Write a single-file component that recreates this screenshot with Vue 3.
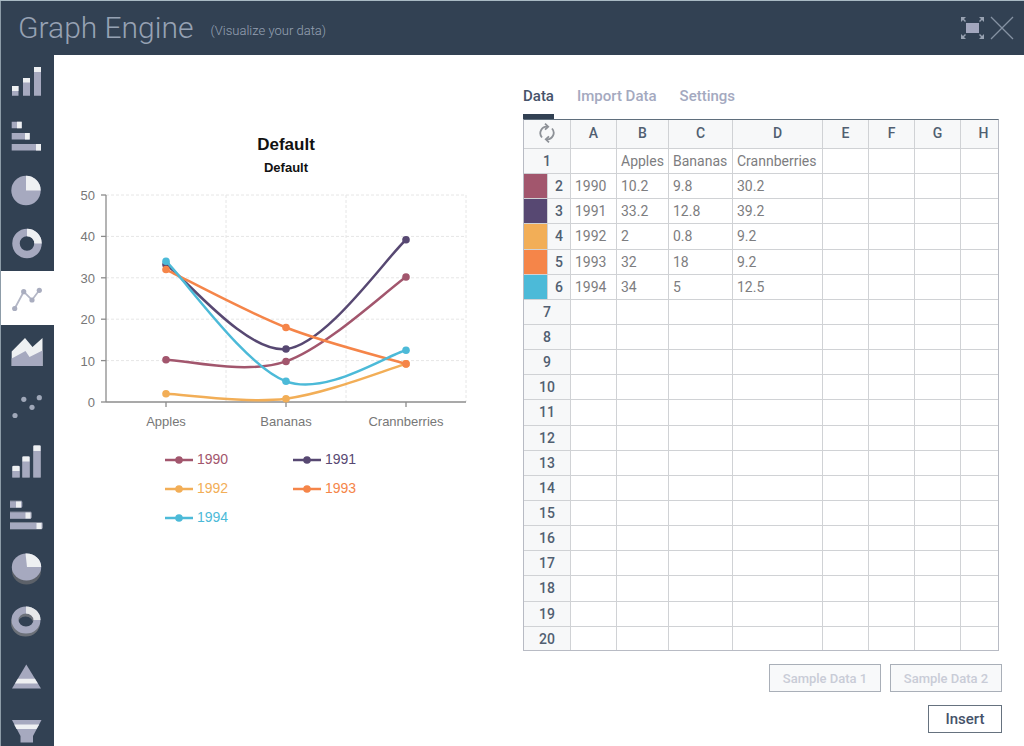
<script setup>
import { ref, computed } from 'vue'

const tools = [
  'Column chart', 'Bar chart', 'Pie chart', 'Donut chart', 'Line chart', 'Area chart', 'Scatter chart',
  '3D column chart', '3D bar chart', '3D pie chart', '3D donut chart', 'Pyramid chart', 'Funnel chart'
]
const activeTool = ref(4)

const tabs = ['Data', 'Import Data', 'Settings']
const activeTab = ref(0)

const categories = ['Apples', 'Bananas', 'Crannberries']
const series = [
  { name: '1990', color: '#a2566d', values: [10.2, 9.8, 30.2] },
  { name: '1991', color: '#574872', values: [33.2, 12.8, 39.2] },
  { name: '1992', color: '#f2ae57', values: [2, 0.8, 9.2] },
  { name: '1993', color: '#f58549', values: [32, 18, 9.2] },
  { name: '1994', color: '#4cbad8', values: [34, 5, 12.5] }
]

const plot = { left: 30, top: 10, width: 360, height: 207, max: 50 }
const step = plot.width / categories.length
const ticks = [0, 10, 20, 30, 40, 50]
const yOf = v => plot.top + plot.height * (1 - v / plot.max)
const xOf = i => plot.left + step * (i + 0.5)

// Catmull-Rom spline expressed as cubic Bezier segments
const curves = computed(() => series.map(s => {
  const p = s.values.map((v, i) => [xOf(i), yOf(v)])
  let d = `M${p[0]}`
  for (let i = 0; i < p.length - 1; i++) {
    const a = p[Math.max(i - 1, 0)]
    const b = p[i]
    const c = p[i + 1]
    const e = p[Math.min(i + 2, p.length - 1)]
    d += `C${b[0] + (c[0] - a[0]) / 6},${b[1] + (c[1] - a[1]) / 6} ${c[0] - (e[0] - b[0]) / 6},${c[1] - (e[1] - b[1]) / 6} ${c}`
  }
  return { ...s, d, points: p }
}))

const columns = ['A', 'B', 'C', 'D', 'E', 'F', 'G', 'H']
const rows = computed(() => Array.from({ length: 20 }, (_, i) => {
  const s = series[i - 1]
  const filled = i === 0 ? ['', ...categories] : s ? [s.name, ...s.values] : []
  return { n: i + 1, series: s ? i : 0, cells: columns.map((_, c) => filled[c] ?? '') }
}))
</script>

<template>
  <div class="app">
    <header class="header">
      <h1>Graph Engine</h1>
      <span class="tagline">(Visualize your data)</span>
      <button class="win" type="button" aria-label="Full screen">
        <svg width="24" height="24" viewBox="0 0 24 24">
          <rect x="6" y="7" width="13" height="10" fill="#a3a7be" />
          <path d="M1 1h5l-2 2 2 2-1 1-2-2-2 2zM24 1h-5l2 2-2 2 1 1 2-2 2 2zM1 23h5l-2-2 2-2-1-1-2 2-2-2zM24 23h-5l2-2-2-2 1-1 2 2 2-2z" fill="#98a2b2" />
        </svg>
      </button>
      <button class="win" type="button" aria-label="Close">
        <svg width="24" height="24" viewBox="0 0 24 24"><path d="M1 1l22 22M23 1L1 23" stroke="#8592a3" stroke-width="1.3" /></svg>
      </button>
    </header>

    <div class="body">
      <nav class="rail" aria-label="Chart type">
        <button v-for="(t, i) in tools" :key="t" type="button" class="tool" :class="{ active: i === activeTool }" :aria-label="t" @click="activeTool = i">
          <svg width="54" height="54" viewBox="0 0 54 54">
            <g v-if="i === 0">
              <path class="m" d="M12 31h6.500v9.700H12zM23 23h7v17.700h-7zM34 12h7v28.700h-7z" />
              <path class="w" d="M12 31h6.500v5H12zM23 23h7v4.500h-7zM34 12h7v5h-7z" />
            </g>
            <g v-else-if="i === 1">
              <path class="m" d="M11.700 12.700h10v6.500h-10zM11.700 24h18v6.500h-18zM11.700 35H41v6.500H11.700z" />
              <path class="w" d="M17 12.700h4.700v6.500H17zM25 24h4.700v6.500H25zM36 35h5v6.500h-5z" />
            </g>
            <g v-else-if="i === 2">
              <circle class="m" cx="26" cy="27.500" r="14.700" />
              <path class="w" d="M26 27.500V12.800A14.700 14.700 0 0 1 40.700 27.500z" />
            </g>
            <g v-else-if="i === 3">
              <circle cx="27" cy="26.500" r="11" fill="none" stroke="#a6a9bf" stroke-width="7.500" />
              <path d="M27 15.500A11 11 0 0 1 38 26.500" fill="none" stroke="#eef0f2" stroke-width="7.500" />
            </g>
            <g v-else-if="i === 4" fill="#a9adbf">
              <path d="M14.700 37.500L23.700 20.700 32 29l7.300-9.700" fill="none" stroke="#b4b7c6" stroke-width="1.800" />
              <circle cx="14.700" cy="37.500" r="2.600" /><circle cx="23.700" cy="20.700" r="2.600" />
              <circle cx="32" cy="29" r="2.600" /><circle cx="39.300" cy="19.300" r="2.600" />
            </g>
            <g v-else-if="i === 5">
              <path class="w" d="M11.700 41V26.500L25 13l7.500 9 10-9v28z" />
              <path class="m" d="M11.700 41v-7.500L25.500 26l4 6 13-6.500V41z" />
            </g>
            <g v-else-if="i === 6" fill="#a0a8b9">
              <circle cx="15" cy="36.500" r="2.600" /><circle cx="23.800" cy="20.300" r="2.600" />
              <circle cx="32" cy="28.300" r="2.600" /><circle cx="39.300" cy="18.700" r="2.600" />
            </g>
            <g v-else-if="i === 7">
              <path class="s" d="M12 34l1.500-1.500h5L20 34v10.500h-8zM22 24.500l1.500-1.500h5l1.500 1.500v20h-8zM33 13.500l1.500-1.500h5l1.500 1.500v31h-8z" />
              <path class="m" d="M12.500 34h7v10.500h-7zM22.500 24h7v20.500h-7zM33.500 13h7v31.500h-7z" />
              <path class="w" d="M12.500 33h7v5h-7zM22.500 23.500h7v5h-7zM33.500 12.500h7v5.500h-7z" />
            </g>
            <g v-else-if="i === 8">
              <path class="s" d="M10 13.500h11.500L22.500 15v4.500L21 21H10zM10 24.500h21l1 1.500v4.500L30.500 32H10zM10 35h32l1 1.500V41l-1.500 1.500H10z" />
              <path class="m" d="M10 14.500h12v6H10zM10 25.500h21v6H10zM10 36h32v6H10z" />
              <path class="w" d="M16 14.500h5v6h-5zM25.500 25.500h5v6h-5zM36.500 36h5v6h-5z" />
            </g>
            <g v-else-if="i === 9">
              <path class="d" d="M12 26h29v4a14.500 13.500 0 0 1-29 0z" />
              <ellipse class="m" cx="26.500" cy="26" rx="14.700" ry="13.500" />
              <path class="w" d="M27 26l-1.500-13.500C34 12 41.200 18 41.200 26z" />
            </g>
            <g v-else-if="i === 10">
              <ellipse cx="25.500" cy="28" rx="11" ry="10" fill="none" stroke="#6c7179" stroke-width="7" />
              <ellipse cx="26" cy="25" rx="11" ry="10" fill="none" stroke="#a6a9bf" stroke-width="7" />
              <path d="M26 15A11 10 0 0 1 37 25" fill="none" stroke="#e6e8ea" stroke-width="7" />
            </g>
            <g v-else-if="i === 11">
              <path class="m" d="M26.300 15.500L41 39.500H12z" />
              <path class="w" d="M17.900 29.700h17l3 4.800H15z" />
            </g>
            <g v-else>
              <path class="m" d="M12 17h29.500L33 33v6.500H20.500V33z" />
              <path class="w" d="M14.200 21.500h25L36.500 26h-20z" />
            </g>
          </svg>
        </button>
      </nav>

      <section class="preview">
        <h2>Default</h2>
        <h3>Default</h3>
        <svg class="chart" width="420" height="250" viewBox="0 0 420 250" role="img" aria-label="Line chart">
          <g stroke="#e6e6e6" stroke-dasharray="3 2">
            <line v-for="t in ticks.slice(1)" :key="t" :x1="plot.left" :x2="plot.left + plot.width" :y1="yOf(t)" :y2="yOf(t)" />
            <line v-for="n in 3" :key="n" :x1="plot.left + step * n" :x2="plot.left + step * n" :y1="plot.top" :y2="plot.top + plot.height" />
          </g>
          <g stroke="#8c8c8c" stroke-width="1.300">
            <line :x1="plot.left" :x2="plot.left" :y1="plot.top" :y2="plot.top + plot.height" />
            <line :x1="plot.left" :x2="plot.left + plot.width" :y1="plot.top + plot.height" :y2="plot.top + plot.height" />
            <line v-for="t in ticks" :key="t" :x1="plot.left - 5" :x2="plot.left" :y1="yOf(t)" :y2="yOf(t)" />
            <line v-for="(c, i) in categories" :key="c" :x1="xOf(i)" :x2="xOf(i)" :y1="plot.top + plot.height" :y2="plot.top + plot.height + 5" />
          </g>
          <g class="labels">
            <text v-for="t in ticks" :key="t" :x="plot.left - 11" :y="yOf(t) + 5" text-anchor="end">{{ t }}</text>
            <text v-for="(c, i) in categories" :key="c" :x="xOf(i)" y="241" text-anchor="middle">{{ c }}</text>
          </g>
          <g v-for="s in curves" :key="s.name">
            <path :d="s.d" fill="none" :stroke="s.color" stroke-width="2.500" />
            <circle v-for="(p, i) in s.points" :key="i" :cx="p[0]" :cy="p[1]" r="3.800" :fill="s.color" />
          </g>
        </svg>
        <ul class="legend">
          <li v-for="(s, i) in series" :key="s.name" :class="'ink' + (i + 1)">
            <svg width="28" height="10" viewBox="0 0 28 10">
              <path d="M0 5h28" :stroke="s.color" stroke-width="2.500" />
              <circle cx="14" cy="5" r="3.800" :fill="s.color" />
            </svg>
            {{ s.name }}
          </li>
        </ul>
      </section>

      <section class="panel">
        <div class="tabs" role="tablist">
          <button v-for="(t, i) in tabs" :key="t" type="button" role="tab" :aria-selected="i === activeTab" :class="{ active: i === activeTab }" @click="activeTab = i">{{ t }}</button>
        </div>
        <div class="sheet">
          <table>
            <colgroup>
              <col class="c-swatch"><col class="c-num"><col class="c-a"><col class="c-b"><col class="c-c"><col class="c-d">
              <col class="c-e"><col class="c-e"><col class="c-e"><col class="c-e">
            </colgroup>
            <thead>
              <tr>
                <th colspan="2">
                  <button class="swap" type="button" aria-label="Swap rows and columns">
                    <svg width="18" height="20" viewBox="0 0 18 20" fill="none" stroke="#8d9197" stroke-width="1.800">
                      <path d="M4 14.500A6.500 6.500 0 0 1 9.500 3.700M14 5.500A6.500 6.500 0 0 1 8.500 16.300" />
                      <path d="M7 .7l3.200 3L7 6.700M11 13.300l-3.200 3 3.200 3" />
                    </svg>
                  </button>
                </th>
                <th v-for="c in columns" :key="c" scope="col">{{ c }}</th>
              </tr>
            </thead>
            <tbody>
              <tr v-for="r in rows" :key="r.n">
                <td v-if="r.series" :class="'fill' + r.series"></td>
                <th scope="row" :colspan="r.series ? 1 : 2">{{ r.n }}</th>
                <td v-for="(v, i) in r.cells" :key="i">{{ v }}</td>
              </tr>
            </tbody>
          </table>
        </div>
        <div class="actions">
          <button type="button" class="sample">Sample Data 1</button>
          <button type="button" class="sample">Sample Data 2</button>
        </div>
        <div class="actions">
          <button type="button" class="insert">Insert</button>
        </div>
      </section>
    </div>
  </div>
</template>

<style>
body { margin: 0; background: #fff; }
</style>

<style scoped>
* { box-sizing: border-box; }
.app {
  display: flex; flex-direction: column; height: 100vh; overflow: hidden;
  border-top: 1px solid #a9bac4; background: #fff;
  font-family: Roboto, "Liberation Sans", sans-serif;
}
button { font: inherit; border: 0; padding: 0; background: none; cursor: pointer; }
svg { display: block; }

.header {
  flex: none; height: 54px; padding: 0 10px 0 17px; display: flex; align-items: center;
  background: #324153; color: #97a2b3; border-left: 1px solid #8d9ca8;
}
.header h1 { margin: 0; font-size: 30px; line-height: 36px; font-weight: 300; }
.tagline { margin: 4px auto 0 17px; font-size: 13px; font-weight: 300; }
.win + .win { margin-left: 6px; }

.body { flex: 1; min-height: 0; display: flex; }
.rail { flex: none; width: 54px; overflow: hidden; background: #324153; border-left: 1px solid #8d9ca8; }
.tool { display: block; width: 54px; height: 54px; margin-left: -1px; }
.tool.active { background: #fff; }
.m { fill: #a6a9bf; }
.w { fill: #eef0f2; }
.s { fill: #7d8494; }
.d { fill: #5c6169; }

.preview {
  flex: 1; min-width: 0; padding: 79px 5px 0 0; display: flex; flex-direction: column; align-items: center;
  font-family: "Liberation Sans", Arial, sans-serif; color: #111;
}
.preview h2 { margin: 0; font-size: 17px; line-height: 22px; }
.preview h3 { margin: 3px 0 0; font-size: 13px; line-height: 18px; }
.chart { margin-top: 8px; }
.labels { font-size: 13px; fill: #777; }
.legend {
  width: 420px; margin: 10px 0 0; padding: 0 0 0 89px; list-style: none;
  display: grid; grid-template-columns: 128px 128px; font-size: 14px; line-height: 29px;
}
.legend li { display: flex; align-items: center; gap: 4px; }
.ink1 { color: #a2566d; } .ink2 { color: #574872; } .ink3 { color: #f2ae57; } .ink4 { color: #f58549; } .ink5 { color: #4cbad8; }

.panel { flex: none; width: 501px; padding: 27px 22px 13px 0; display: flex; flex-direction: column; }
.tabs { display: flex; gap: 23px; height: 37px; }
.tabs button {
  padding-bottom: 4px; color: #a4a9bf; font-size: 15px; font-weight: 500; line-height: 20px;
  border-bottom: 5px solid transparent;
}
.tabs button.active { color: #46536a; border-bottom-color: #324153; }
.sheet {
  flex: 1; min-height: 0; margin-right: 3px; overflow: hidden;
  border: 1px solid #b8bbc4; border-top-color: #5f6e7c;
}
table { table-layout: fixed; width: 483px; height: 532px; border-spacing: 0; font-size: 14px; line-height: 20px; }
th, td { padding: 0 0 0 4px; border: solid #d0d2d5; border-width: 0 1px 1px 0; white-space: nowrap; }
td { color: #7d7d80; text-align: left; }
th { padding: 0; background: #f7f8f9; color: #515f71; font-weight: 500; }
thead th { padding-bottom: 2px; }
thead tr { height: 29px; }
tbody tr { height: 25px; }
.c-swatch { width: 24px; } .c-num { width: 23px; } .c-a { width: 46px; } .c-b { width: 52px; }
.c-c { width: 64px; } .c-d { width: 90px; } .c-e { width: 46px; }
.fill1 { background: #a2566d; } .fill2 { background: #574872; } .fill3 { background: #f2ae57; } .fill4 { background: #f58549; } .fill5 { background: #4cbad8; }
.swap { display: block; width: 18px; margin: 0 auto; }

.actions { display: flex; justify-content: flex-end; gap: 9px; margin-top: 13px; }
.actions button { height: 28px; font-weight: 500; border: 1px solid #a9afb8; }
.sample { width: 112px; font-size: 13px; color: #c9ccd7; background: #f8f9fa; }
.actions .insert { width: 74px; font-size: 15px; color: #46536a; border-color: #66727f; background: #fff; }
</style>
